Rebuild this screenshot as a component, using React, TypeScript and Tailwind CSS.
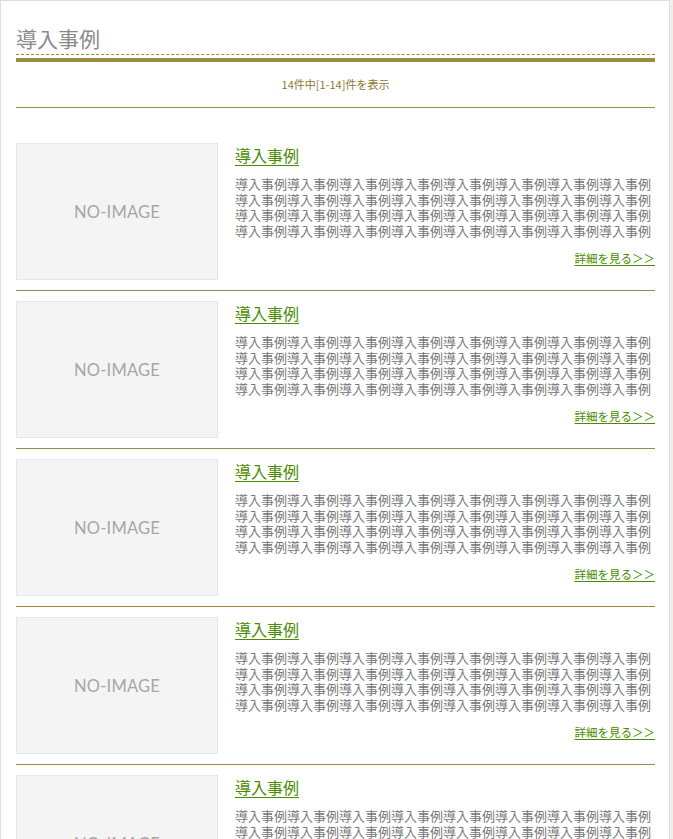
import React from "react";

const jp = "font-['Noto_Sans_CJK_JP','Noto_Sans',sans-serif]";

function Item() {
  const desc = "導入事例".repeat(32);
  return (
    <div className="border-b border-[#9a8b40] pt-[10px] pb-[10px] first:pt-0">
      <div className="flex gap-[17px]">
        <div className="w-[202px] h-[137px] shrink-0 border border-[#e6e6e6] bg-[#f4f4f4] flex items-center justify-center">
          <span className="font-['Lato',sans-serif] text-[16.5px] leading-[20px] text-[#a6a6a6] tracking-[0.2px]">NO-IMAGE</span>
        </div>
        <div className="flex-1 min-w-0 flex flex-col">
          <a className={`${jp} text-[16px] leading-[24px] text-[#4a8c00] underline underline-offset-[3px] self-start`}>導入事例</a>
          <p className={`${jp} mt-[9px] text-[13px] leading-[15.6px] text-[#777777] break-all`}>{desc}</p>
          <div className={`${jp} flex justify-end mt-[12px] text-[11.5px] leading-[16px]`}>
            <a className="text-[#4a8c00] underline underline-offset-[2px]">詳細を見る＞＞</a>
          </div>
        </div>
      </div>
    </div>
  );
}

export default function App() {
  const items = Array.from({ length: 14 });
  return (
    <div className="min-h-screen bg-[#f2eee4] flex">
      <div className="w-[670px] bg-white border-l border-t border-r border-[#dcdcef] pl-[15px] pr-[14px] pb-[20px]">
        <div className="mt-[23px] pb-[2px] border-b border-dashed border-[#9a8b40]">
          <h1 className={`${jp} text-[21px] leading-[28px] text-[#8a8a8a] font-normal`}>導入事例</h1>
        </div>
        <div className="mt-[3px] h-[4px] bg-[#9a8b40]" />
        <div className={`${jp} mt-[14px] pb-[15px] border-b border-[#9a8b40] text-center text-[11px] leading-[16px] text-[#8a7a30]`}>
          14件中[1-14]件を表示
        </div>
        <div className="pt-[35px]">
          {items.map((_, i) => (
            <Item key={i} />
          ))}
        </div>
      </div>
    </div>
  );
}
